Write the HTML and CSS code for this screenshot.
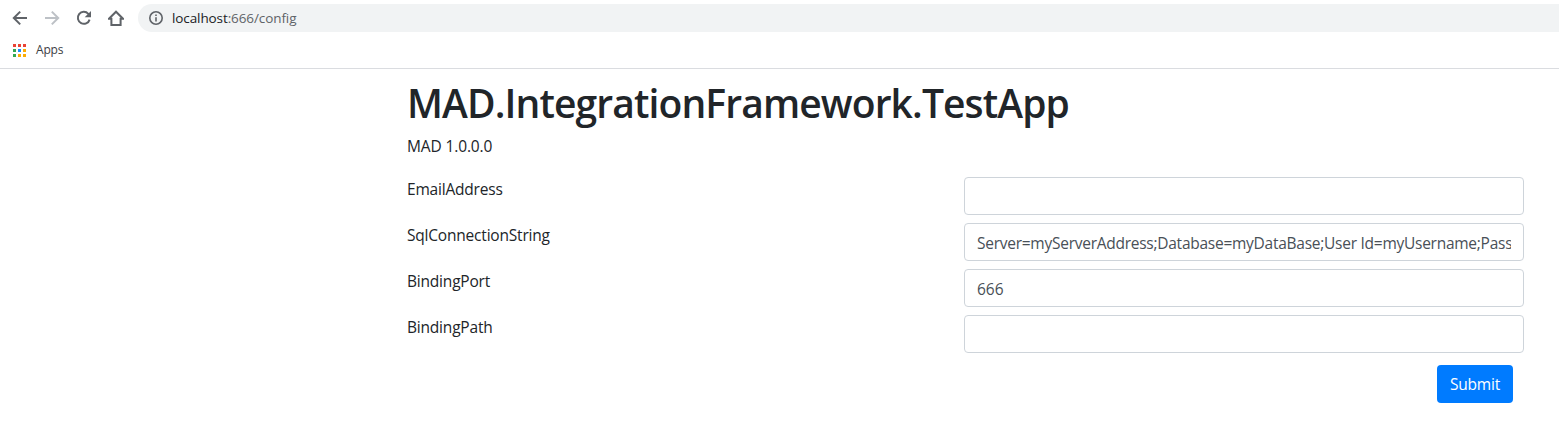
FILE: index.html
```html
<!DOCTYPE html>
<html lang="en">
<head>
<meta charset="utf-8">
<title>MAD.IntegrationFramework.TestApp</title>
<link rel="stylesheet" href="styles.css">
</head>
<body>
<header class="browser">
  <div class="toolbar">
    <nav class="nav-icons">
      <svg class="icon" viewBox="0 0 16 16"><path d="M15 8H2.4M8.2 1.6L1.8 8l6.4 6.4"/></svg>
      <svg class="icon icon-disabled" viewBox="0 0 16 16"><path d="M1 8h12.6M7.8 1.6L14.2 8l-6.4 6.4"/></svg>
      <svg class="icon" viewBox="0 0 16 16"><path d="M13.6 9.6A6 6 0 1 1 12.3 3.8L13.2 4.7"/><path class="solid" d="M15 1v6.3H8.7z"/></svg>
      <svg class="icon" viewBox="0 0 16 16"><path d="M.9 8.8H3.4V15H12.6V8.8H15.1L8 1.7z"/></svg>
    </nav>
    <div class="address">
      <svg class="info" viewBox="0 0 14 14"><circle cx="7" cy="7" r="6.2"/><path d="M7 6.2v4.3M7 3.5v1.6"/></svg>
      <span class="url"><span class="host">localhost</span>:666/config</span>
    </div>
  </div>
  <div class="bookmarks">
    <svg class="apps" viewBox="0 0 13 13">
      <path fill="#ea4335" d="M0 0h3v3H0zM5 0h3v3H5zM10 0h3v3h-3z"/>
      <path fill="#34a853" d="M0 5h3v3H0zM0 10h3v3H0z"/>
      <path fill="#1a8cff" d="M5 5h3v3H5z"/>
      <path fill="#fbac05" d="M10 5h3v3h-3zM5 10h3v3H5zM10 10h3v3h-3z"/>
    </svg>
    <span class="apps-label">Apps</span>
  </div>
</header>
<main class="content">
  <h1 class="title">MAD.IntegrationFramework.TestApp</h1>
  <p class="version">MAD 1.0.0.0</p>
  <form class="form">
    <div class="row"><label class="label" for="email">EmailAddress</label><input class="field" id="email" type="text"></div>
    <div class="row"><label class="label" for="sql">SqlConnectionString</label><input class="field" id="sql" type="text" value="Server=myServerAddress;Database=myDataBase;User Id=myUsername;Password=myPassword;"></div>
    <div class="row"><label class="label" for="port">BindingPort</label><input class="field digits" id="port" type="text" value="666"></div>
    <div class="row"><label class="label" for="path">BindingPath</label><input class="field" id="path" type="text"></div>
    <div class="actions"><button class="submit" type="button">Submit</button></div>
  </form>
</main>
</body>
</html>
```
FILE: styles.css
```css
* { box-sizing: border-box; }
body {
  margin: 0;
  background: #fff;
  color: #212529;
  font-family: "Open Sans", "Noto Sans", sans-serif;
  font-size: 15.5px;
  line-height: 24px;
  overflow: hidden;
}
.browser { height: 69px; padding-top: 4px; border-bottom: 1px solid #dadce0; }
.toolbar { display: flex; height: 28px; }
.nav-icons { display: flex; align-items: center; gap: 16px; width: 138px; padding-left: 12px; }
.icon { width: 16px; height: 16px; flex: none; fill: none; stroke: #5f6368; stroke-width: 2; }
.icon-disabled { stroke: #bdc1c6; }
.solid { fill: #5f6368; stroke: none; }
.address {
  display: flex; align-items: center; flex: 1; gap: 9px;
  padding-left: 11px; background: #f1f3f4; border-radius: 14px 0 0 14px;
}
.info { width: 14px; height: 14px; fill: none; stroke: #5f6368; stroke-width: 1.6; }
.url { font-size: 13.5px; letter-spacing: -.1px; color: #5f6368; }
.host { color: #202124; }
.bookmarks { display: flex; align-items: center; gap: 10px; height: 36px; padding-left: 13px; }
.apps { width: 13px; height: 13px; }
.apps-label { font-size: 12px; letter-spacing: -.2px; color: #3c4043; }
.content { padding: 10px 35px 0 407px; }
.title {
  margin: 0; font-size: 39px; font-weight: 600; line-height: 48px;
  letter-spacing: -.88px; white-space: nowrap;
}
.version { margin: 7px 0 19px; letter-spacing: -.13px; }
.form { margin: 0; }
.row { display: grid; grid-template-columns: 557px 560px; height: 46px; }
.label { height: 24px; letter-spacing: -.2px; }
.field {
  width: 100%; height: 38px; padding: 8px 12px 6px;
  border: 1px solid #ced4da; border-radius: 4px; background: #fff;
  color: #495057; font: inherit; letter-spacing: -.26px;
}
.digits { letter-spacing: 0; }
.actions { display: flex; justify-content: flex-end; padding: 4px 11px 0 0; }
.submit {
  width: 76px; height: 38px; padding: 0; border: 0; border-radius: 4px;
  background: #007bff; color: #fff; font: inherit; letter-spacing: -.2px;
}
```
